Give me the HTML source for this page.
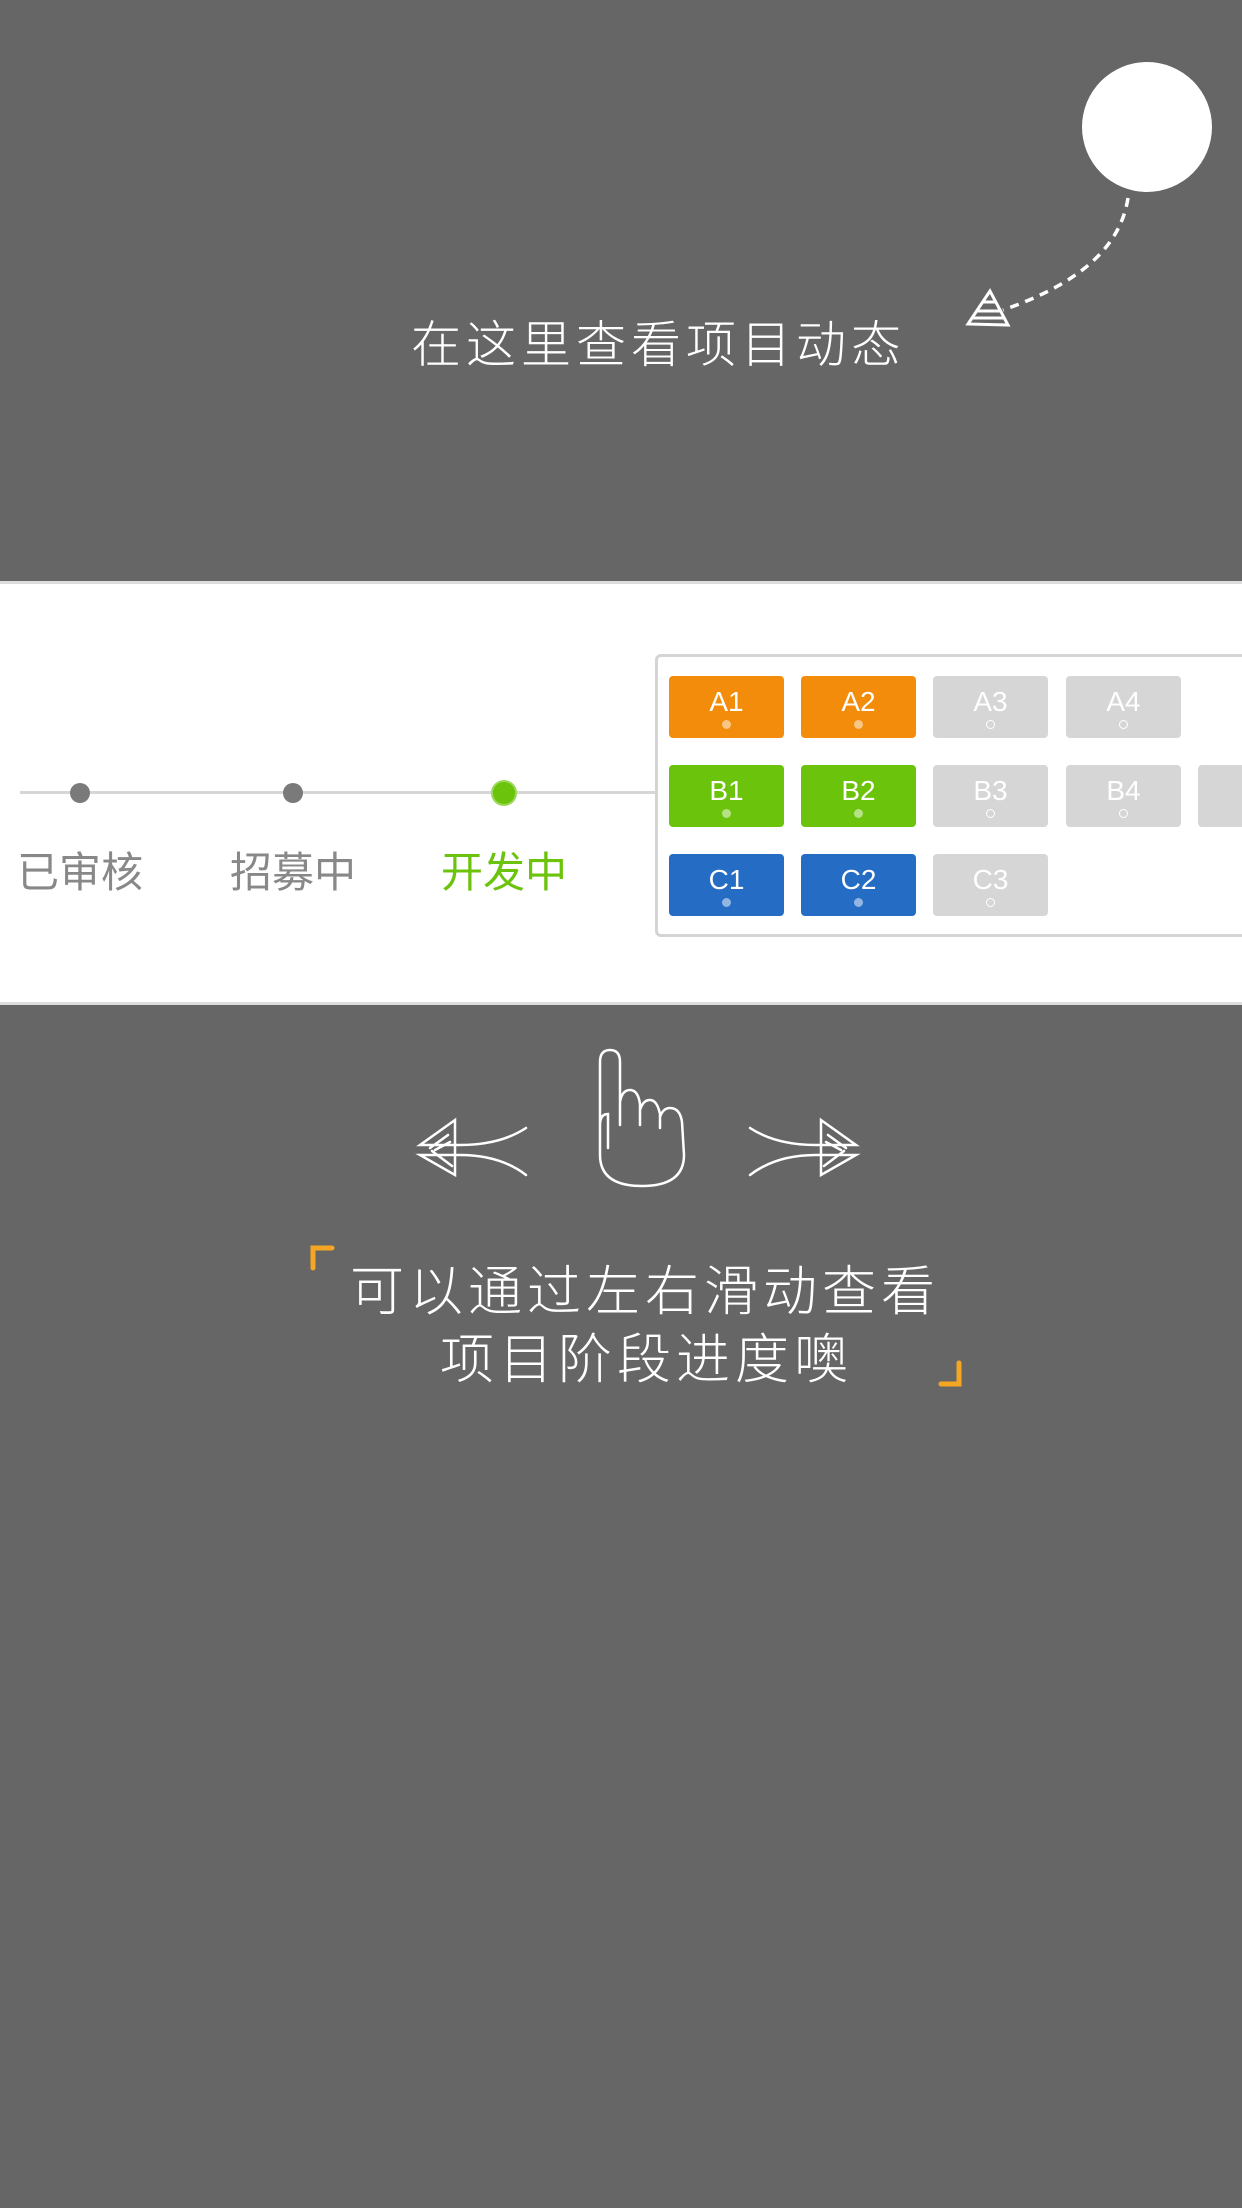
<!DOCTYPE html>
<html><head><meta charset="utf-8"><style>
*{margin:0;padding:0;box-sizing:border-box}
body{width:1242px;height:2208px;background:#666;position:relative;overflow:hidden;font-family:"Liberation Sans","Noto Sans CJK SC",sans-serif}
.t{position:absolute;color:#fff;white-space:nowrap;font-family:"Noto Sans CJK SC",sans-serif;font-weight:300}
.panel{position:absolute;left:0;top:581px;width:1242px;height:424px;background:#fff;border-top:3px solid #ddd;border-bottom:3px solid #ddd}
.lbl{position:absolute;top:255px;font-size:42px;color:#888;transform:translateX(-50%);white-space:nowrap;font-family:"Noto Sans CJK SC",sans-serif}
.dot{position:absolute;top:199px;width:20px;height:20px;border-radius:50%;background:#7a7a7a;transform:translateX(-50%)}
.card{position:absolute;left:655px;top:70px;width:620px;height:283px;border:3px solid #d4d4d4;border-right:none;border-radius:6px 0 0 6px;background:#fff}
.tile{position:absolute;width:115px;height:62px;border-radius:4px;color:#fff;font-size:28px;text-align:center;line-height:52px;font-family:"Liberation Sans Narrow","Liberation Sans",sans-serif}
.tile i{position:absolute;left:53px;top:44px;width:9px;height:9px;border-radius:50%;background:rgba(255,255,255,.5)}
.g i{background:none;border:1.5px solid #fff}
.o{background:#f28c0a}.gr{background:#6cc30c}.b{background:#246cc4}.g{background:#d6d6d6}
</style></head><body>
<svg style="position:absolute;left:0;top:0" width="1242" height="560">
<circle cx="1147" cy="127" r="65" fill="#fff"/>
<path d="M1128 198 C1120 250 1075 285 1003 310" fill="none" stroke="#fff" stroke-width="3.5" stroke-dasharray="9 7"/>
<path d="M990 291 L968 324 L1008 325 Z M982 302 L996 302 M976 311 L1000 311 M972 318 L1004 318" fill="none" stroke="#fff" stroke-width="3"/>
</svg>
<div class="t" style="left:411px;top:305px;font-size:50px;letter-spacing:5px">在这里查看项目动态</div>
<div class="panel">
<div style="position:absolute;left:20px;top:207px;width:640px;height:3px;background:#d6d6d6"></div>
<div class="dot" style="left:80px"></div>
<div class="dot" style="left:293px"></div>
<div class="dot" style="left:504px;width:26px;height:26px;top:196px;background:#6cc30c;border:2px solid #9ad85a"></div>
<div class="lbl" style="left:80px">已审核</div>
<div class="lbl" style="left:293px">招募中</div>
<div class="lbl" style="left:504px;color:#6cc30c">开发中</div>
<div class="card">
<div class="tile o" style="left:11px;top:19px">A1<i></i></div>
<div class="tile o" style="left:143px;top:19px">A2<i></i></div>
<div class="tile g" style="left:275px;top:19px">A3<i></i></div>
<div class="tile g" style="left:408px;top:19px">A4<i></i></div>
<div class="tile gr" style="left:11px;top:108px">B1<i></i></div>
<div class="tile gr" style="left:143px;top:108px">B2<i></i></div>
<div class="tile g" style="left:275px;top:108px">B3<i></i></div>
<div class="tile g" style="left:408px;top:108px">B4<i></i></div>
<div class="tile g" style="left:540px;top:108px"></div>
<div class="tile b" style="left:11px;top:197px">C1<i></i></div>
<div class="tile b" style="left:143px;top:197px">C2<i></i></div>
<div class="tile g" style="left:275px;top:197px">C3<i></i></div>
</div>
</div>
<svg style="position:absolute;left:0;top:1020px" width="1242" height="400" fill="none" stroke="#fff" stroke-width="2.5" stroke-linecap="round">
<path d="M600 135 L600 42 Q600 30 610 30 Q620 30 620 42 L620 105 M620 82 Q622 70 630 70 Q638 70 640 84 L640 105 M640 90 Q643 80 650 80 Q657 80 660 94 L660 108 M660 97 Q663 88 670 88 Q680 88 682 102 L684 135 Q684 166 642 166 Q600 166 600 135 M600 105 Q600 94 608 94 L608 128"/>
<path d="M526 108 Q500 125 460 125 L420 125 L455 100 L455 155 L420 135 L460 135 Q500 135 526 155 M430 128 L448 115 M435 130 L450 122 M432 131 L452 146"/>
<path d="M750 108 Q776 125 816 125 L856 125 L821 100 L821 155 L856 135 L816 135 Q776 135 750 155 M846 128 L828 115 M841 130 L826 122 M844 131 L824 146"/>
<path d="M313 1268 L313 1248 L332 1248" stroke="#f5a623" stroke-width="5" transform="translate(0,-1020)"/>
<path d="M941 1384 L959 1384 L959 1363" stroke="#f5a623" stroke-width="5" transform="translate(0,-1020)"/>
</svg>
<div class="t" style="left:350px;top:1247px;font-size:54px;letter-spacing:5px">可以通过左右滑动查看</div>
<div class="t" style="left:440px;top:1315px;font-size:54px;letter-spacing:5px">项目阶段进度噢</div>
</body></html>
